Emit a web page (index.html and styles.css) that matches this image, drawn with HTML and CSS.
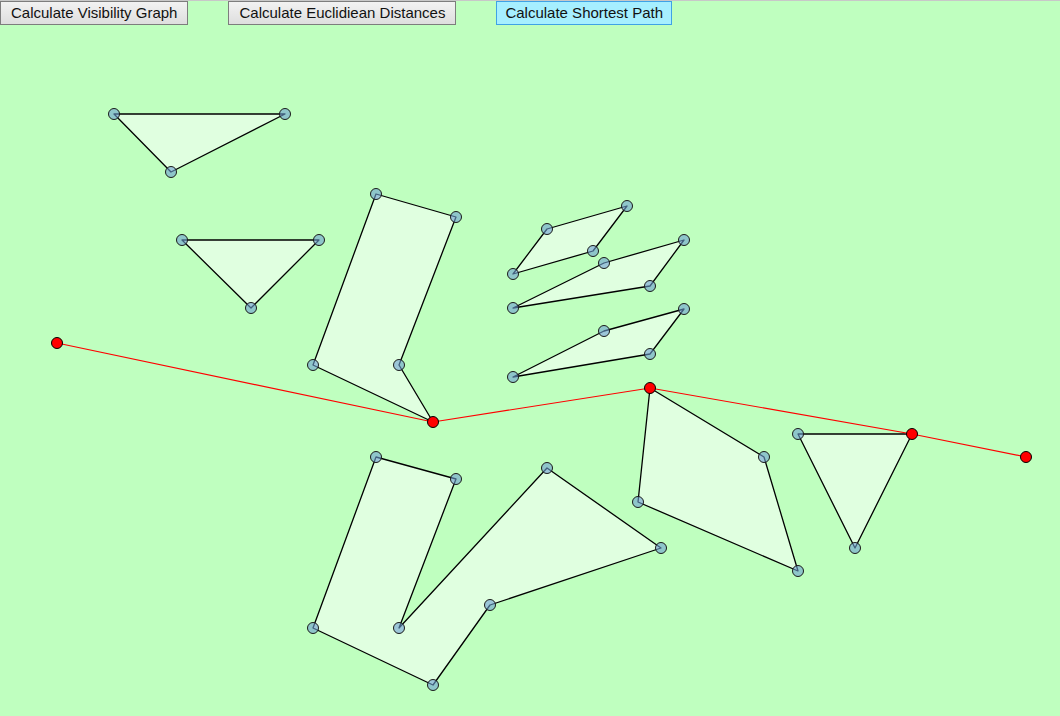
FILE: index.html
```html
<!DOCTYPE html>
<html>
<head>
<meta charset="utf-8">
<link rel="stylesheet" href="styles.css">
</head>
<body>
<div class="toolbar">
  <button class="btn">Calculate Visibility Graph</button>
  <button class="btn">Calculate Euclidiean Distances</button>
  <button class="btn btn-active">Calculate Shortest Path</button>
</div>
<svg class="canvas" width="1060" height="691" viewBox="0 25 1060 691" xmlns="http://www.w3.org/2000/svg">
  <g class="poly">
    <polygon points="114,114 285,114 171,172"/>
    <polygon points="182,240 319,240 251,308"/>
    <polygon points="376,194 456,217 399,365 433,422 313,365"/>
    <polygon points="513,274 547,229 627,206 593,251"/>
    <polygon points="513,308 604,263 684,240 650,286"/>
    <polygon points="513,377 604,331 684,309 650,354"/>
    <polygon points="650,388 764,457 798,571 638,502"/>
    <polygon points="798,434 912,434 855,548"/>
    <polygon points="376,457 456,479 399,628 547,468 661,548 490,605 433,685 313,628"/>
  </g>
  <polyline class="path" points="57,343 433,422 650,388 912,434 1026,457"/>
  <g class="vtx">
    <circle cx="114" cy="114" r="5.5"/><circle cx="285" cy="114" r="5.5"/><circle cx="171" cy="172" r="5.5"/>
    <circle cx="182" cy="240" r="5.5"/><circle cx="319" cy="240" r="5.5"/><circle cx="251" cy="308" r="5.5"/>
    <circle cx="376" cy="194" r="5.5"/><circle cx="456" cy="217" r="5.5"/><circle cx="399" cy="365" r="5.5"/><circle cx="313" cy="365" r="5.5"/>
    <circle cx="513" cy="274" r="5.5"/><circle cx="547" cy="229" r="5.5"/><circle cx="627" cy="206" r="5.5"/><circle cx="593" cy="251" r="5.5"/>
    <circle cx="513" cy="308" r="5.5"/><circle cx="604" cy="263" r="5.5"/><circle cx="684" cy="240" r="5.5"/><circle cx="650" cy="286" r="5.5"/>
    <circle cx="513" cy="377" r="5.5"/><circle cx="604" cy="331" r="5.5"/><circle cx="684" cy="309" r="5.5"/><circle cx="650" cy="354" r="5.5"/>
    <circle cx="764" cy="457" r="5.5"/><circle cx="798" cy="571" r="5.5"/><circle cx="638" cy="502" r="5.5"/>
    <circle cx="798" cy="434" r="5.5"/><circle cx="855" cy="548" r="5.5"/>
    <circle cx="376" cy="457" r="5.5"/><circle cx="456" cy="479" r="5.5"/><circle cx="399" cy="628" r="5.5"/><circle cx="547" cy="468" r="5.5"/>
    <circle cx="661" cy="548" r="5.5"/><circle cx="490" cy="605" r="5.5"/><circle cx="433" cy="685" r="5.5"/><circle cx="313" cy="628" r="5.5"/>
  </g>
  <g class="pathpt">
    <circle cx="57" cy="343" r="5.5"/><circle cx="433" cy="422" r="5.5"/><circle cx="650" cy="388" r="5.5"/><circle cx="912" cy="434" r="5.5"/><circle cx="1026" cy="457" r="5.5"/>
  </g>
</svg>
</body>
</html>
```
FILE: styles.css
```css
html, body {
  margin: 0;
  padding: 0;
  background: #bfffbf;
  overflow: hidden;
}
body {
  border-top: 1px solid #c8c8c8;
  width: 1060px;
  height: 715px;
}
.toolbar {
  display: flex;
  gap: 40px;
  height: 24px;
}
.btn {
  box-sizing: border-box;
  height: 24px;
  margin: 0;
  padding: 0 10px;
  font-family: "Liberation Sans", Arial, sans-serif;
  font-size: 15px;
  color: #111;
  background: linear-gradient(#f2f2f2, #dedede);
  border: 1px solid #7d7d7d;
  border-radius: 0;
  line-height: 20px;
}
.btn-active {
  padding: 0 8px;
  background: #a6efff;
  border-color: #3fa2e6;
}
.canvas {
  display: block;
}
.poly polygon {
  fill: #e0ffe0;
  stroke: #000;
  stroke-width: 1.3;
  stroke-linejoin: round;
}
.path {
  fill: none;
  stroke: #ff0000;
  stroke-width: 1.2;
}
.vtx circle {
  fill: rgba(110, 160, 210, 0.6);
  stroke: #1a1a1a;
  stroke-width: 1;
}
.pathpt circle {
  fill: #ff0000;
  stroke: #000;
  stroke-width: 1;
}
```
